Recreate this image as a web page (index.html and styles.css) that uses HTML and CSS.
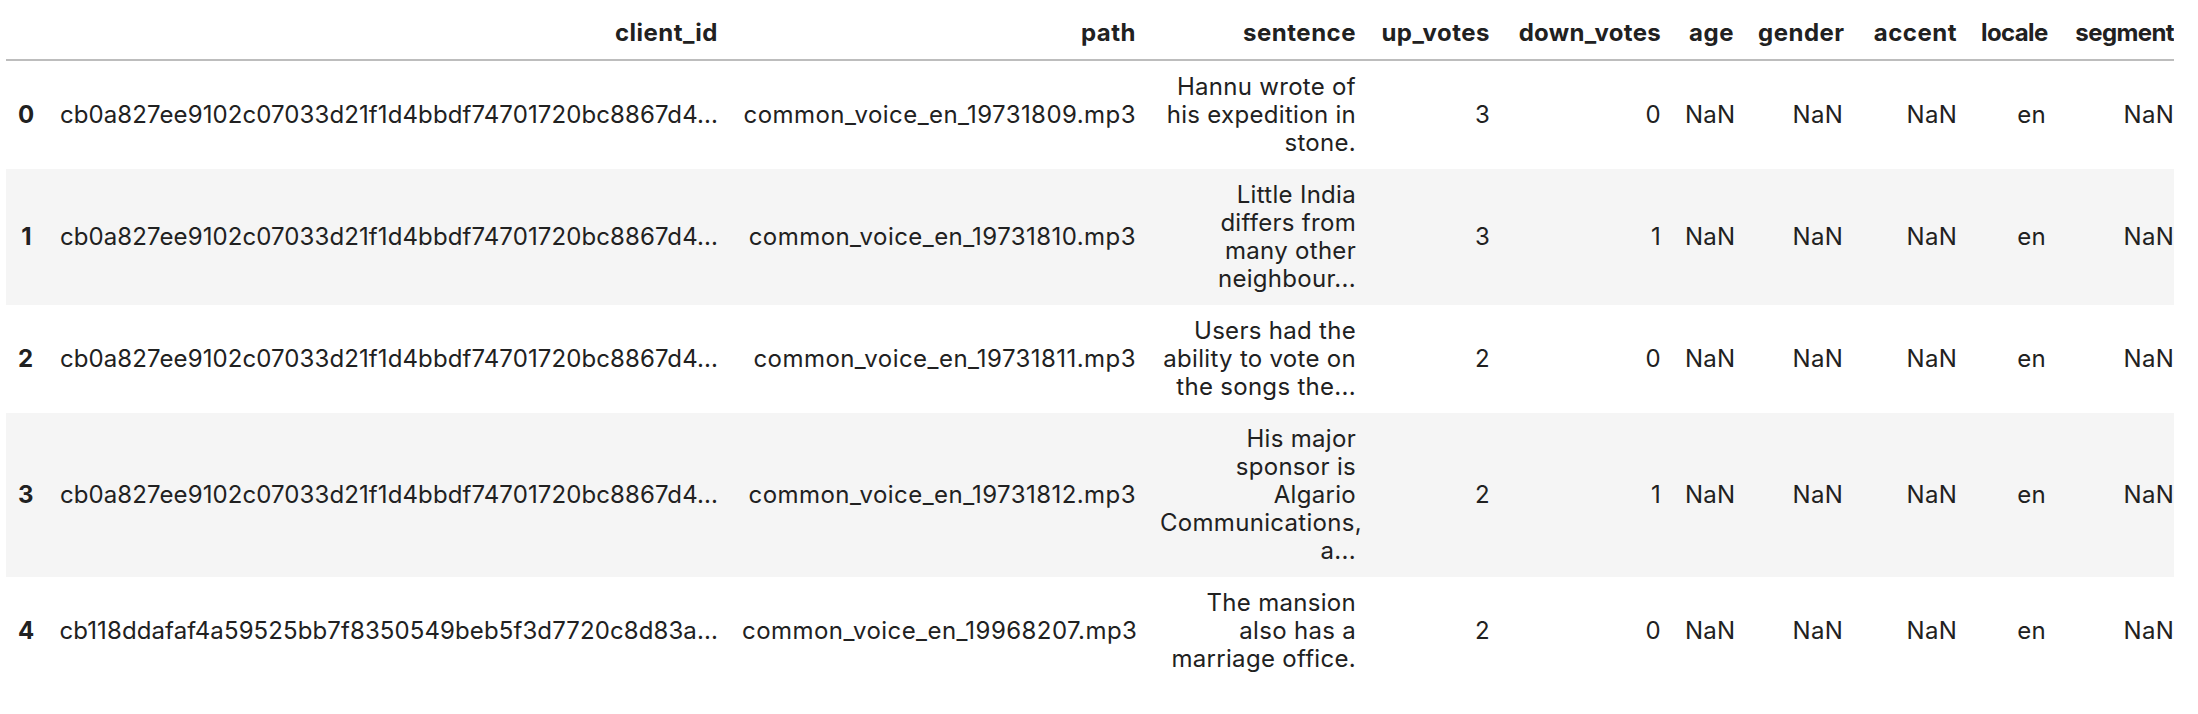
FILE: index.html
```html
<!DOCTYPE html>
<html>
<head>
<meta charset="utf-8">
<link rel="stylesheet" href="styles.css">
</head>
<body>
<div class="output">
<table class="dataframe">
  <colgroup>
    <col class="c-idx"><col class="c-client"><col class="c-path"><col class="c-sentence"><col class="c-up"><col class="c-down"><col class="c-age"><col class="c-gender"><col class="c-accent"><col class="c-locale"><col class="c-segment">
  </colgroup>
  <thead>
    <tr>
      <th></th>
      <th>client_id</th>
      <th>path</th>
      <th>sentence</th>
      <th>up_votes</th>
      <th class="tight">down_votes</th>
      <th>age</th>
      <th>gender</th>
      <th>accent</th>
      <th class="narrow">locale</th>
      <th class="narrow">segment</th>
    </tr>
  </thead>
  <tbody>
    <tr>
      <th>0</th>
      <td class="client">cb0a827ee9102c07033d21f1d4bbdf74701720bc8867d4...</td>
      <td class="path">common_voice_en_19731809.mp3</td>
      <td class="sentence">Hannu wrote of<br>his expedition in<br>stone.</td>
      <td>3</td>
      <td>0</td>
      <td>NaN</td>
      <td>NaN</td>
      <td>NaN</td>
      <td>en</td>
      <td>NaN</td>
    </tr>
    <tr>
      <th>1</th>
      <td class="client">cb0a827ee9102c07033d21f1d4bbdf74701720bc8867d4...</td>
      <td class="path">common_voice_en_19731810.mp3</td>
      <td class="sentence">Little India<br>differs from<br>many other<br>neighbour...</td>
      <td>3</td>
      <td>1</td>
      <td>NaN</td>
      <td>NaN</td>
      <td>NaN</td>
      <td>en</td>
      <td>NaN</td>
    </tr>
    <tr>
      <th>2</th>
      <td class="client">cb0a827ee9102c07033d21f1d4bbdf74701720bc8867d4...</td>
      <td class="path">common_voice_en_19731811.mp3</td>
      <td class="sentence">Users had the<br>ability to vote on<br>the songs the...</td>
      <td>2</td>
      <td>0</td>
      <td>NaN</td>
      <td>NaN</td>
      <td>NaN</td>
      <td>en</td>
      <td>NaN</td>
    </tr>
    <tr>
      <th>3</th>
      <td class="client">cb0a827ee9102c07033d21f1d4bbdf74701720bc8867d4...</td>
      <td class="path">common_voice_en_19731812.mp3</td>
      <td class="sentence">His major<br>sponsor is<br>Algario<br>Communications,<br>a...</td>
      <td>2</td>
      <td>1</td>
      <td>NaN</td>
      <td>NaN</td>
      <td>NaN</td>
      <td>en</td>
      <td>NaN</td>
    </tr>
    <tr>
      <th>4</th>
      <td class="client">cb118ddafaf4a59525bb7f8350549beb5f3d7720c8d83a...</td>
      <td class="path">common_voice_en_19968207.mp3</td>
      <td class="sentence">The mansion<br>also has a<br>marriage office.</td>
      <td>2</td>
      <td>0</td>
      <td>NaN</td>
      <td>NaN</td>
      <td>NaN</td>
      <td>en</td>
      <td>NaN</td>
    </tr>
  </tbody>
</table>
</div>
</body>
</html>
```

FILE: styles.css
```css
html, body {
  margin: 0;
  padding: 0;
  background: #ffffff;
}

.output {
  padding: 7px 0 0 6px;
  width: 2168px;
  overflow: hidden;
}

.dataframe {
  border-collapse: collapse;
  border-spacing: 0;
  border: none;
  table-layout: fixed;
  width: 2180px;
  font-family: Inter, "Noto Sans", sans-serif;
  font-size: 24px;
  line-height: 28px;
  color: #212121;
}

.c-idx { width: 38px; }
.c-client { width: 686px; }
.c-path { width: 418px; }
.c-sentence { width: 220px; }
.c-up { width: 134px; }
.c-down { width: 171px; }
.c-age { width: 73px; }
.c-gender { width: 109px; }
.c-accent { width: 114px; }
.c-locale { width: 89px; }
.c-segment { width: 128px; }

.dataframe thead {
  border-bottom: 2px solid #bdbdbd;
}

.dataframe th,
.dataframe td {
  padding: 12px;
  text-align: right;
  vertical-align: middle;
  white-space: nowrap;
}

.dataframe th {
  font-weight: bold;
  letter-spacing: 0.5px;
}

.dataframe th.tight {
  letter-spacing: 0.3px;
}

.dataframe th.narrow {
  letter-spacing: -0.6px;
}

.dataframe td {
  font-weight: normal;
  letter-spacing: 0.25px;
}

.dataframe td.client {
  letter-spacing: 0.1px;
}

.dataframe td.path {
  letter-spacing: 0.45px;
}

.dataframe td.sentence {
  letter-spacing: 0.3px;
}

.dataframe tbody tr:nth-child(even) {
  background: #f5f5f5;
}
```
